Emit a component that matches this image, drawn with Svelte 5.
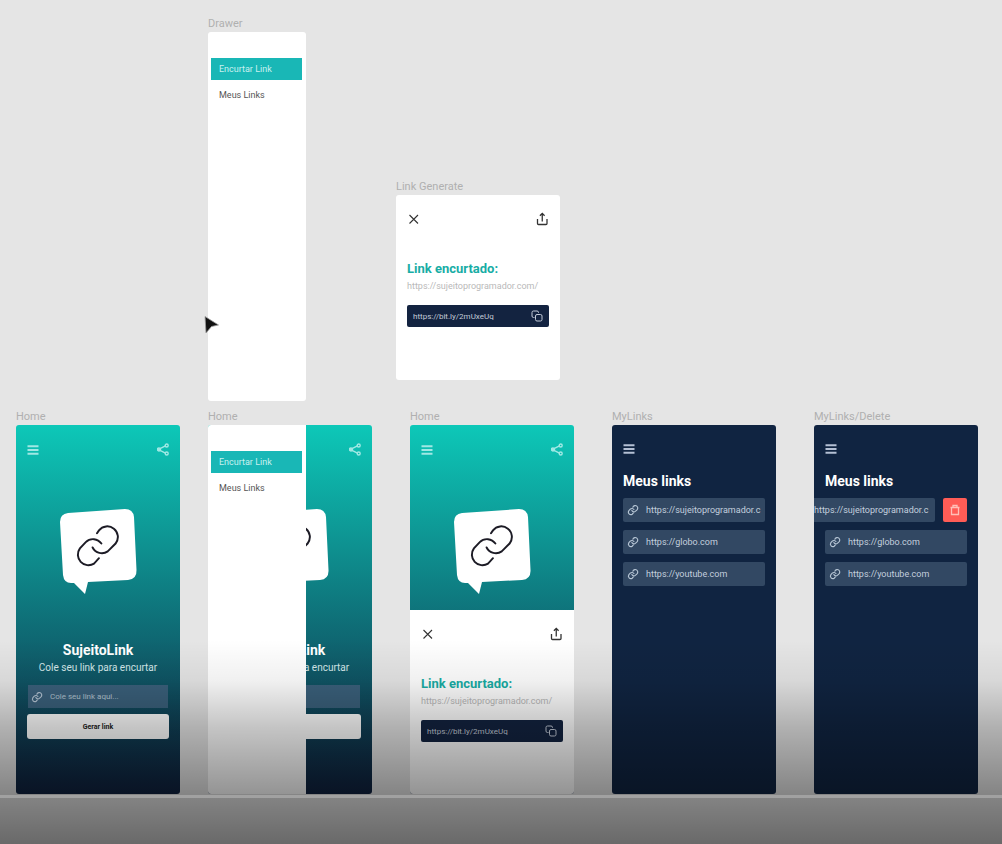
<script>
  const links = ['https://sujeitoprogramador.c', 'https://globo.com', 'https://youtube.com'];
</script>

{#snippet chain(cls)}
  <svg class={cls} viewBox="0 0 44 44" fill="none" stroke="currentColor" stroke-linecap="round" aria-hidden="true">
    <path d="M21.500 9.500 L23.500 6.500 A10.800 10.800 0 0 1 40.500 20 L32.500 28 A10.500 10.500 0 0 1 17 24" />
    <path d="M26 20 A10.500 10.500 0 0 0 10 18.500 L4 25 A10.800 10.800 0 0 0 18.500 40.500 L23.500 35" />
  </svg>
{/snippet}

{#snippet menuIcon()}
  <button class="icon" aria-label="Menu">
    <svg width="12" height="12" viewBox="0 0 12 12" stroke="currentColor" stroke-width="1.900" aria-hidden="true">
      <path d="M0.500 2.200h11M0.500 6h11M0.500 9.800h11" />
    </svg>
  </button>
{/snippet}

{#snippet hero()}
  <div class="bar">
    {@render menuIcon()}
    <button class="icon" aria-label="Compartilhar">
      <svg width="12" height="13" viewBox="0 0 12 13" fill="none" stroke="currentColor" stroke-width="1.400" aria-hidden="true">
        <path d="M2.500 5.800L8.500 2.800M2.500 7.200L8.500 10.200" />
        <circle cx="2" cy="6.500" r="1.500" fill="currentColor" />
        <circle cx="9.700" cy="2.500" r="1.500" />
        <circle cx="9.700" cy="10.500" r="1.500" />
      </svg>
    </button>
  </div>
  <div class="bubble">
    <svg width="78" height="88" viewBox="0 0 78 88" aria-hidden="true">
      <path fill="#fff" d="M9 5 L66 1 Q74 1 75 9 L77.500 62 Q78 71 69 72 L29 74 L26 86 L15 75 L12 75 Q5 75 4 67 L1 14 Q1 6 9 5Z" />
    </svg>
    {@render chain('chain-big')}
  </div>
{/snippet}

{#snippet shortener(placeholder)}
  <h2 class="brand">SujeitoLink</h2>
  <p class="tagline">Cole seu link para encurtar</p>
  <label class="field">
    {@render chain('chain-small')}
    <input type="text" {placeholder} aria-label="Link" />
  </label>
  <button class="generate">Gerar link</button>
{/snippet}

{#snippet drawer()}
  <nav class="drawer">
    <a class="active" href="#encurtar">Encurtar Link</a>
    <a href="#links">Meus Links</a>
  </nav>
{/snippet}

{#snippet generated()}
  <div class="sheet">
    <div class="sheet-bar">
      <button class="icon" aria-label="Fechar">
        <svg width="12" height="14" viewBox="0 0 12 14" stroke="currentColor" stroke-width="1.100" aria-hidden="true">
          <path d="M1.500 3l8.500 8.500M10 3L1.500 11.500" />
        </svg>
      </button>
      <button class="icon" aria-label="Compartilhar">
        <svg width="12" height="14" viewBox="0 0 12 14" fill="none" stroke="currentColor" stroke-width="1.300" aria-hidden="true">
          <path d="M1.500 7v4.500a1 1 0 0 0 1 1h7.500a1 1 0 0 0 1-1V7M6.250 9.500V1.500M3.900 3.800L6.250 1.400L8.600 3.800" />
        </svg>
      </button>
    </div>
    <h2>Link encurtado:</h2>
    <p>https://sujeitoprogramador.com/</p>
    <div class="short">
      <span>https://bit.ly/2mUxeUq</span>
      <button class="icon" aria-label="Copiar">
        <svg width="12" height="12" viewBox="0 0 12 12" fill="none" stroke="currentColor" aria-hidden="true">
          <rect x="4.500" y="4.500" width="6.500" height="6.500" rx="1.500" />
          <path d="M3.500 7.500h-1a1.500 1.500 0 0 1-1.500-1.500V2.500a1.500 1.500 0 0 1 1.500-1.500h3.500a1.500 1.500 0 0 1 1.500 1.500v.5" />
        </svg>
      </button>
    </div>
  </div>
{/snippet}

{#snippet list(deleting)}
  <div class="bar">{@render menuIcon()}</div>
  <h2 class="heading">Meus links</h2>
  <ul>
    {#each links as link, i}
      <li class:swiped={deleting && i === 0}>
        <a class="row" href={'#link' + i}>
          {@render chain('chain-small')}
          <span>{link}</span>
        </a>
        {#if deleting && i === 0}
          <button class="delete" aria-label="Excluir">
            <svg width="12" height="12" viewBox="0 0 12 12" fill="none" stroke="currentColor" stroke-width="1.300" aria-hidden="true">
              <path d="M1.500 3.500h9M4 3.500V1.500h4v2M2.500 3.500v7h7v-7" />
            </svg>
          </button>
        {/if}
      </li>
    {/each}
  </ul>
{/snippet}

<main>
  <section class="frame at-drawer">
    <h1>Drawer</h1>
    <div class="board narrow">{@render drawer()}</div>
  </section>
  <section class="frame at-link">
    <h1>Link Generate</h1>
    <div class="board card">{@render generated()}</div>
  </section>
  <section class="frame at-home">
    <h1>Home</h1>
    <div class="board teal">
      {@render hero()}
      {@render shortener('Cole seu link aqui...')}
    </div>
  </section>
  <section class="frame at-home-menu">
    <h1>Home</h1>
    <div class="board teal">
      {@render hero()}
      {@render shortener('')}
      <div class="over-left">{@render drawer()}</div>
    </div>
  </section>
  <section class="frame at-home-link">
    <h1>Home</h1>
    <div class="board teal">
      {@render hero()}
      <div class="over-bottom">{@render generated()}</div>
    </div>
  </section>
  <section class="frame at-list">
    <h1>MyLinks</h1>
    <div class="board navy">{@render list(false)}</div>
  </section>
  <section class="frame at-delete">
    <h1>MyLinks/Delete</h1>
    <div class="board navy">{@render list(true)}</div>
  </section>

  <svg class="pointer" width="18" height="22" viewBox="0 0 18 22" aria-hidden="true">
    <path d="M3 3.500L16.500 12L9.500 13.500L4 20Z" fill="#111" stroke="#999" stroke-width=".8" />
  </svg>

  <div class="shade"><div class="track"></div></div>
</main>

<style>
  :global(body) { margin: 0; }
  main {
    position: relative;
    height: 100vh;
    overflow: hidden;
    background: #e5e5e5;
    font-family: Roboto, sans-serif;
  }
  h1, h2, p, ul { margin: 0; padding: 0; }
  button { border: 0; padding: 0; font-family: inherit; cursor: pointer; }
  a { text-decoration: none; color: inherit; }
  svg { display: block; flex: none; }
  .icon { background: none; color: inherit; }

  .frame { position: absolute; }
  .at-drawer { left: 208px; top: 16px; }
  .at-link { left: 396px; top: 179px; }
  .at-home { left: 16px; top: 409px; }
  .at-home-menu { left: 208px; top: 409px; }
  .at-home-link { left: 410px; top: 409px; }
  .at-list { left: 612px; top: 409px; }
  .at-delete { left: 814px; top: 409px; }
  h1 { font-size: 11px; line-height: 16px; font-weight: 400; color: #b0b0b0; }

  .board {
    position: relative;
    box-sizing: border-box;
    width: 164px;
    height: 369px;
    border-radius: 3px;
    overflow: hidden;
    display: flex;
    flex-direction: column;
    padding: 18px 11px;
  }
  .narrow { width: 98px; padding: 0; background: #fff; }
  .card { height: 185px; padding: 0; background: #fff; }
  .teal { background: linear-gradient(#0dc8b8, #10213f); color: #fff; }
  .navy { background: #102441; color: #fff; }

  .bar { display: flex; justify-content: space-between; color: #a0e8e4; }
  .navy .bar { color: #b4c0d4; }

  .bubble { position: relative; align-self: center; margin-top: 52px; }
  :global(.chain-big) {
    position: absolute;
    left: 17px;
    top: 16px;
    width: 43px;
    height: 43px;
    stroke-width: 2;
    color: #1c1b25;
  }
  :global(.chain-small) { width: 10px; height: 10px; stroke-width: 5; color: #b8c7d6; overflow: visible; }

  .brand { margin-top: 44px; font-size: 14px; line-height: 20px; font-weight: 700; text-align: center; }
  .tagline { font-size: 10px; line-height: 16px; text-align: center; color: #d5e8ea; white-space: nowrap; }
  .field {
    display: flex;
    align-items: center;
    gap: 8px;
    height: 23px;
    margin: 9px 1px 0;
    padding: 0 4px;
    background: #3a607b;
  }
  .field input {
    flex: 1;
    min-width: 0;
    border: 0;
    padding: 0;
    background: none;
    font: 8px/12px Roboto, sans-serif;
    color: #fff;
  }
  .field input::placeholder { color: #b2c3cf; opacity: 1; }
  .generate {
    height: 25px;
    flex: none;
    margin-top: 6px;
    border-radius: 3px;
    background: #fff;
    color: #222;
    font-size: 7px;
    font-weight: 700;
  }

  .drawer {
    box-sizing: border-box;
    width: 98px;
    height: 100%;
    padding: 26px 4px 0 3px;
    display: flex;
    flex-direction: column;
    gap: 4px;
    background: #fff;
    color: #555;
    font-size: 9px;
  }
  .drawer a { height: 22px; line-height: 22px; padding-left: 8px; }
  .drawer .active { background: #19b7b6; color: #c9f1f0; }
  .over-left { position: absolute; left: 0; top: 0; bottom: 0; }
  .over-bottom { position: absolute; left: 0; right: 0; bottom: 0; height: 184px; background: #fff; }

  .sheet { padding: 17px 11px 0; color: #333; }
  .sheet-bar { display: flex; justify-content: space-between; padding: 0 1px; }
  .sheet h2 { margin-top: 34px; font-size: 13px; line-height: 18px; font-weight: 700; color: #18ada5; white-space: nowrap; }
  .sheet p { font-size: 9px; line-height: 16px; color: #b9b9b9; white-space: nowrap; }
  .short {
    display: flex;
    align-items: center;
    justify-content: space-between;
    height: 22px;
    margin-top: 11px;
    padding: 0 6px;
    border-radius: 2px;
    background: #132340;
    color: #c3cbd8;
    font-size: 8px;
  }

  .heading { margin-top: 16px; font-size: 14px; line-height: 20px; font-weight: 700; }
  ul { list-style: none; display: flex; flex-direction: column; gap: 8px; margin-top: 7px; }
  li { display: flex; gap: 8px; }
  .row {
    box-sizing: border-box;
    flex: none;
    width: 100%;
    height: 24px;
    display: flex;
    align-items: center;
    gap: 8px;
    padding: 0 5px;
    border-radius: 2px;
    background: #324863;
    color: #c3cfde;
    font-size: 9px;
    white-space: nowrap;
  }
  .swiped { margin-left: -32px; margin-right: 32px; }
  .swiped .row { width: 142px; gap: 6px; }
  .delete {
    flex: none;
    width: 24px;
    height: 24px;
    display: grid;
    place-items: center;
    border-radius: 2px;
    background: #ff5c56;
    color: #ffc0b8;
  }

  .pointer { position: absolute; left: 202px; top: 313px; }
  .shade {
    position: absolute;
    left: 0;
    right: 0;
    bottom: 0;
    height: 204px;
    pointer-events: none;
    background: linear-gradient(rgba(0, 0, 0, 0), rgba(0, 0, 0, .06) 20%, rgba(0, 0, 0, .23) 43%, rgba(0, 0, 0, .41) 74%, rgba(0, 0, 0, .54));
  }
  .track { margin-top: 155px; height: 3px; background: #a1a1a1; }
</style>
